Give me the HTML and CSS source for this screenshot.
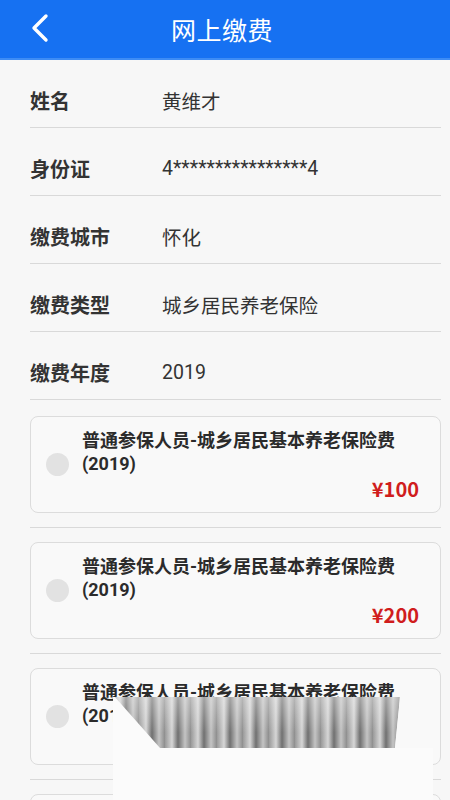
FILE: index.html
```html
<!DOCTYPE html>
<html lang="zh-CN">
<head>
    <meta charset="UTF-8">
    <meta name="viewport" content="width=device-width, initial-scale=1.0">
    <title>网上缴费</title>
    <link rel="stylesheet" href="styles.css">
</head>
<body>
    <header class="topbar">
        <a class="back" href="#">
            <svg width="20" height="30" viewBox="0 0 20 30">
                <polyline points="16,3 4,15 16,27" fill="none" stroke="#fff" stroke-width="3.4" stroke-linecap="round" stroke-linejoin="round"/>
            </svg>
        </a>
        <h1>网上缴费</h1>
    </header>

    <main class="content">
        <div class="info-row"><span class="label">姓名</span><span class="value">黄维才</span></div>
        <div class="info-row"><span class="label">身份证</span><span class="value">4****************4</span></div>
        <div class="info-row"><span class="label">缴费城市</span><span class="value">怀化</span></div>
        <div class="info-row"><span class="label">缴费类型</span><span class="value">城乡居民养老保险</span></div>
        <div class="info-row"><span class="label">缴费年度</span><span class="value">2019</span></div>

        <div class="bills">
            <div class="bill">
                <div class="bill-card">
                    <span class="radio"></span>
                    <div class="bill-body">
                        <p class="bill-title">普通参保人员-城乡居民基本养老保险费<br>(2019)</p>
                        <p class="bill-price">¥100</p>
                    </div>
                </div>
            </div>
            <div class="bill">
                <div class="bill-card">
                    <span class="radio"></span>
                    <div class="bill-body">
                        <p class="bill-title">普通参保人员-城乡居民基本养老保险费<br>(2019)</p>
                        <p class="bill-price">¥200</p>
                    </div>
                </div>
            </div>
            <div class="bill">
                <div class="bill-card">
                    <span class="radio"></span>
                    <div class="bill-body">
                        <p class="bill-title">普通参保人员-城乡居民基本养老保险费<br>(2019)</p>
                        <p class="bill-price"></p>
                    </div>
                </div>
            </div>
            <!-- next card only peeks in at the bottom edge -->
            <div class="bill">
                <div class="bill-card"></div>
            </div>
            <!-- smudge from the original capture, covers the third card -->
            <div class="smudge">
                <div class="streaks"></div>
            </div>
        </div>
    </main>
</body>
</html>
```

FILE: styles.css
```css
* {
    box-sizing: border-box;
}
body {
    margin: 0;
    background: #f7f7f7;
    font-family: Roboto, "Noto Sans CJK SC", sans-serif;
    color: #333;
    height: 800px;
    overflow: hidden;
}
.topbar {
    height: 60px;
    background: #1671f2;
    border-bottom: 2px solid #3d8cf5;
    display: flex;
    align-items: center;
    justify-content: center;
    position: relative;
}
.topbar h1 {
    margin: 0;
    font-size: 25px;
    font-weight: normal;
    color: #fff;
    letter-spacing: 0.5px;
    margin-left: -6px;
}
.back {
    position: absolute;
    left: 30px;
    top: 13px;
    display: flex;
}
.content {
    padding: 0 9px 0 30px;
}
.info-row {
    display: flex;
    align-items: center;
    height: 68px;
    padding-top: 14px;
    border-bottom: 1.5px solid #d9d9d9;
}
.label {
    width: 132px;
    font-size: 20px;
    font-weight: bold;
    color: #333;
}
.value {
    font-size: 19.5px;
    color: #333;
}
.bills {
    position: relative;
    padding-top: 16px;
}
.bill {
    padding-bottom: 14px;
    margin-bottom: 14px;
    border-bottom: 1.5px solid #d9d9d9;
}
.bill-card {
    display: flex;
    align-items: center;
    height: 97px;
    background: #f9f9f9;
    border: 1px solid #dcdcdc;
    border-radius: 8px;
    padding: 0 21px 0 15px;
}
.radio {
    width: 23px;
    height: 23px;
    border-radius: 50%;
    background: #e2e2e2;
    flex-shrink: 0;
    margin-right: 13px;
    margin-top: -1px;
}
.bill-body {
    flex: 1;
}
.bill-title {
    margin: 0;
    font-size: 18px;
    font-weight: bold;
    line-height: 23px;
    color: #2b2b2b;
}
.bill-price {
    margin: 2px 0 0;
    min-height: 24px;
    text-align: right;
    font-family: "Noto Sans CJK SC", sans-serif;
    font-size: 20px;
    font-weight: bold;
    line-height: 24px;
    color: #d01d1d;
}
.smudge {
    position: absolute;
    left: 83px;
    top: 297px;
    width: 320px;
    height: 110px;
    background: #fbfbfb;
    clip-path: polygon(0 0, 287px 0, 282px 51px, 320px 51px, 320px 110px, 0 110px);
}
.streaks {
    height: 51px;
    background:
        linear-gradient(to bottom, rgba(255,255,255,0.35), rgba(255,255,255,0) 70%),
        repeating-linear-gradient(to right, #9a9a9a 0, #d6d6d6 7px, #707070 13px, #c4c4c4 20px, #8c8c8c 26px);
    clip-path: polygon(2px 0, 287px 0, 282px 51px, 47px 51px);
}
```
